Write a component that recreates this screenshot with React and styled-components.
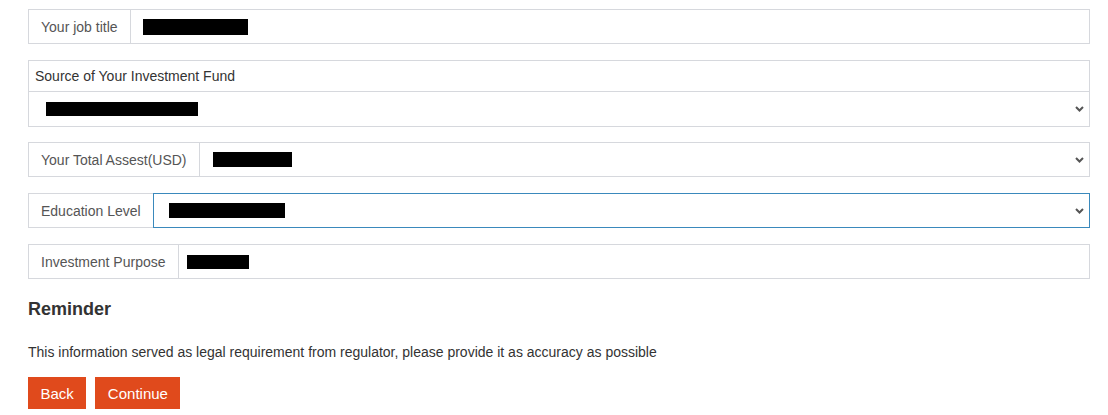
import React from 'react';
import styled, { createGlobalStyle } from 'styled-components';

const GlobalStyle = createGlobalStyle`
    body {
        margin: 0;
        background: #fff;
        font-family: "Liberation Sans", Arial, sans-serif;
        font-size: 14px;
        color: #333;
    }
`

const Page = styled.div`
    padding: 9px 18px 0 28px;
`

const Group = styled.div`
    display: flex;
    height: 35px;
    box-sizing: border-box;
    border: 1px solid #d6d8dd;
    margin-bottom: 16px;
`

const Addon = styled.div`
    display: flex;
    align-items: center;
    padding: 0 12px;
    color: #555;
    border-right: 1px solid ${p => (p.$active ? 'transparent' : '#d6d8dd')};
    margin-right: ${p => (p.$active ? '-1px' : '0')};
    white-space: nowrap;
`

const Field = styled.div`
    flex: 1;
    display: flex;
    align-items: center;
    box-sizing: border-box;
    margin: ${p => (p.$focused ? '-1px -1px -1px 0' : '0')};
    border: ${p => (p.$focused ? '1px solid #3a89bc' : 'none')};
`

const Stacked = styled.div`
    border: 1px solid #d6d8dd;
    margin-bottom: 15px;
`

const StackLabel = styled.div`
    height: 30px;
    display: flex;
    align-items: center;
    padding: 0 6px;
    color: #333;
    border-bottom: 1px solid #d6d8dd;
`

const StackField = styled.div`
    height: 34px;
    display: flex;
    align-items: center;
`

const Redact = styled.span`
    display: inline-block;
    background: #000;
    height: ${p => p.$h || 15}px;
    width: ${p => p.$w}px;
    margin-left: ${p => p.$x}px;
`

const Chevron = styled.svg`
    margin-left: auto;
    margin-right: 5px;
    flex: none;
`

const Heading = styled.h3`
    margin: 20px 0 0;
    font-size: 18px;
    font-weight: bold;
    color: #333;
`

const Note = styled.p`
    margin: 24px 0 0;
    color: #333;
`

const Buttons = styled.div`
    display: flex;
    gap: 9px;
    margin-top: 17px;
`

const Button = styled.button`
    height: 32px;
    padding: 0 12.5px;
    border: none;
    background: #e04a1c;
    color: #fff;
    font-family: inherit;
    font-size: 15px;
`

const Arrow = () => (
    <Chevron width="9" height="6" viewBox="0 0 9 6">
        <path d="M1 1 L4.5 4.5 L8 1" fill="none" stroke="#555" strokeWidth="2" />
    </Chevron>
)

const App = () => (
    <Page>
        <GlobalStyle />
        <Group>
            <Addon>Your job title</Addon>
            <Field>
                <Redact $x={12} $w={105} $h={16} />
            </Field>
        </Group>
        <Stacked>
            <StackLabel>Source of Your Investment Fund</StackLabel>
            <StackField>
                <Redact $x={17} $w={152} $h={14} />
                <Arrow />
            </StackField>
        </Stacked>
        <Group>
            <Addon>Your Total Assest(USD)</Addon>
            <Field>
                <Redact $x={13} $w={79} $h={15} />
                <Arrow />
            </Field>
        </Group>
        <Group>
            <Addon $active>Education Level</Addon>
            <Field $focused>
                <Redact $x={15} $w={116} $h={15} />
                <Arrow />
            </Field>
        </Group>
        <Group>
            <Addon>Investment Purpose</Addon>
            <Field>
                <Redact $x={8} $w={62} $h={14} />
            </Field>
        </Group>
        <Heading>Reminder</Heading>
        <Note>This information served as legal requirement from regulator, please provide it as accuracy as possible</Note>
        <Buttons>
            <Button>Back</Button>
            <Button>Continue</Button>
        </Buttons>
    </Page>
)

export default App;
